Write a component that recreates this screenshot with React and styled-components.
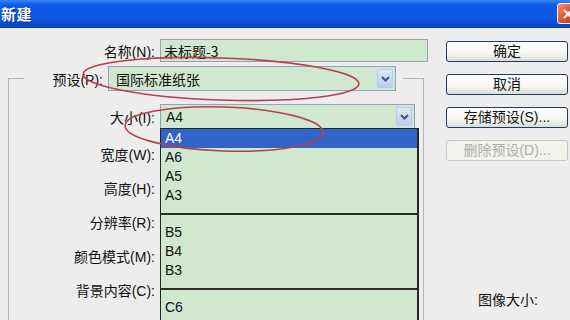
import React from 'react';
import styled, { createGlobalStyle } from 'styled-components';

const GlobalStyle = createGlobalStyle`
  body {
    margin: 0;
    background: #ededed;
  }
`;

const Dialog = styled.div`
  position: relative;
  width: 570px;
  height: 320px;
  overflow: hidden;
  display: flex;
  flex-direction: column;
  background: #ededed;
  font-family: "Liberation Sans", "Noto Sans CJK SC", sans-serif;
  font-size: 14px;
  color: #111;
`;

const TitleBar = styled.div`
  height: 28px;
  flex: none;
  display: flex;
  align-items: center;
  justify-content: space-between;
  padding-left: 1px;
  background: linear-gradient(#3c86f4 0%, #0b5be6 18%, #0a56df 70%, #0846c8 100%);
  border-bottom: 1px solid #0a3aa8;
  box-sizing: border-box;
`;

const Title = styled.span`
  color: #fff;
  font-family: "Noto Sans CJK SC", sans-serif;
  font-weight: bold;
  font-size: 15px;
  letter-spacing: 0.5px;
  text-shadow: 1px 1px 0 #0a2f8a;
`;

const CloseButton = styled.div`
  width: 22px;
  height: 21px;
  margin-right: -9px;
  box-sizing: border-box;
  border: 1px solid #fff;
  border-radius: 3px;
  background: linear-gradient(135deg, #f09070, #d8502e 55%, #b8381a);
  display: flex;
  align-items: center;
  justify-content: center;
`;

const Body = styled.div`
  flex: 1;
  display: flex;
`;

const Main = styled.div`
  width: 428px;
  padding-left: 8px;
  box-sizing: border-box;
  flex: none;
`;

const Row = styled.div`
  display: flex;
  align-items: center;
  gap: 5px;
  height: ${(p) => p.$h || 23}px;
  margin-top: ${(p) => p.$mt || 0}px;
`;

const Label = styled.span`
  width: ${(p) => p.$w}px;
  flex: none;
  text-align: right;
  white-space: nowrap;
`;

const TextBox = styled.div`
  width: ${(p) => p.$w}px;
  height: ${(p) => p.$h || 23}px;
  box-sizing: border-box;
  border: 1px solid #98a2ac;
  background: #cfe8cf;
  display: flex;
  align-items: center;
  padding-left: ${(p) => p.$pl || 3}px;
  font-family: "Noto Sans CJK SC", sans-serif;
`;

const Select = styled(TextBox)`
  position: relative;
  justify-content: space-between;
  padding-right: 2px;
  border-color: #8fa3bb;
`;

const ArrowButton = styled.div`
  width: 16px;
  height: 19px;
  box-sizing: border-box;
  border: 1px solid #b9c9ea;
  border-radius: 2px;
  background: linear-gradient(#dfe8fb, #bccdf1);
  display: flex;
  align-items: center;
  justify-content: center;
`;

const Group = styled.fieldset`
  width: 416px;
  height: 300px;
  margin: 4px 0 0 0;
  padding: 0;
  box-sizing: border-box;
  border: 1px solid #b4b4b0;
  border-bottom: none;
`;

const Legend = styled.legend`
  margin-left: 15px;
  padding: 0 7px 0 0;
  display: flex;
  align-items: center;
  gap: 5px;
`;

const FieldList = styled.div`
  margin-top: 8px;
`;

const DropList = styled.div`
  position: absolute;
  top: 100%;
  left: -1px;
  width: 259px;
  height: 200px;
  box-sizing: border-box;
  background: #cfe8cf;
  border: 1px solid #262626;
  border-right-width: 2px;
  z-index: 2;
  font-family: "Liberation Sans", sans-serif;
`;

const Item = styled.div`
  height: ${(p) => (p.$selected ? 19 : 18.75)}px;
  line-height: ${(p) => (p.$selected ? 19 : 18.75)}px;
  padding-left: 4px;
  background: ${(p) => (p.$selected ? '#3164c6' : 'transparent')};
  color: ${(p) => (p.$selected ? '#fff' : '#111')};
`;

const Separator = styled.div`
  height: 18.75px;
  display: flex;
  align-items: center;
  &::after {
    content: '';
    flex: 1;
    height: 2px;
    background: #2e2e2e;
  }
`;

const Side = styled.div`
  width: 122px;
  margin-left: 18px;
  padding-top: 13px;
  display: flex;
  flex-direction: column;
  gap: 12px;
`;

const Button = styled.button`
  height: 21px;
  padding: 0;
  border: 1px solid ${(p) => (p.disabled ? '#cac8bc' : '#1d3c6a')};
  border-radius: 3px;
  background: ${(p) =>
    p.disabled ? '#f3f3ee' : 'linear-gradient(#ffffff, #f4f4f0 65%, #dcdcd4)'};
  color: ${(p) => (p.disabled ? '#aeaea6' : '#111')};
  font-family: "Liberation Sans", "Noto Sans CJK SC", sans-serif;
  font-size: 14px;
  line-height: 19px;
`;

const InfoLabel = styled.div`
  margin-top: 118px;
  padding-left: 32px;
  line-height: 18px;
  white-space: nowrap;
`;

const Annotations = styled.svg`
  position: absolute;
  left: 0;
  top: 0;
  pointer-events: none;
  z-index: 3;
`;

const Chevron = () => (
  <svg width="9" height="6" viewBox="0 0 9 6">
    <path d="M1 1 L4.5 4.5 L8 1" fill="none" stroke="#3e5580" strokeWidth="2" />
  </svg>
);

const fields = ['宽度(W):', '高度(H):', '分辨率(R):', '颜色模式(M):', '背景内容(C):'];

const groups = [['A6', 'A5', 'A3'], ['B5', 'B4', 'B3'], ['C6']];

const App = () => {
  return (
    <Dialog>
      <GlobalStyle />
      <TitleBar>
        <Title>新建</Title>
        <CloseButton>
          <svg width="10" height="10" viewBox="0 0 10 10">
            <path d="M1 1 L9 9 M9 1 L1 9" stroke="#fff" strokeWidth="2" />
          </svg>
        </CloseButton>
      </TitleBar>
      <Body>
        <Main>
          <Row $mt={11}>
            <Label $w={147}>名称(N):</Label>
            <TextBox $w={268}>未标题-3</TextBox>
          </Row>
          <Group>
            <Legend>
              <Label $w={79}>预设(P):</Label>
              <Select $w={288} $h={25} $pl={7}>
                国际标准纸张
                <ArrowButton><Chevron /></ArrowButton>
              </Select>
            </Legend>
            <Row $h={25} $mt={13}>
              <Label $w={146}>大小(I):</Label>
              <Select $w={255} $h={25} $pl={5}>
                <span style={{ fontFamily: '"Liberation Sans", sans-serif' }}>A4</span>
                <ArrowButton><Chevron /></ArrowButton>
                <DropList>
                  <Item $selected>A4</Item>
                  {groups.map((g, i) => (
                    <React.Fragment key={i}>
                      {i > 0 && <Separator />}
                      {g.map((s) => (
                        <Item key={s}>{s}</Item>
                      ))}
                    </React.Fragment>
                  ))}
                </DropList>
              </Select>
            </Row>
            <FieldList>
              {fields.map((f) => (
                <Row key={f} $h={34}>
                  <Label $w={146}>{f}</Label>
                </Row>
              ))}
            </FieldList>
          </Group>
        </Main>
        <Side>
          <Button>确定</Button>
          <Button>取消</Button>
          <Button>存储预设(S)...</Button>
          <Button disabled>删除预设(D)...</Button>
          <InfoLabel>图像大小:</InfoLabel>
        </Side>
      </Body>
      <Annotations width="570" height="320" viewBox="0 0 570 320">
        <ellipse cx="221" cy="79" rx="138" ry="21" fill="none" stroke="#b8404c" strokeWidth="1.6" transform="rotate(2 221 79)" />
        <ellipse cx="224" cy="129" rx="99" ry="22" fill="none" stroke="#b8404c" strokeWidth="1.6" transform="rotate(2 224 129)" />
      </Annotations>
    </Dialog>
  );
};

export default App;
